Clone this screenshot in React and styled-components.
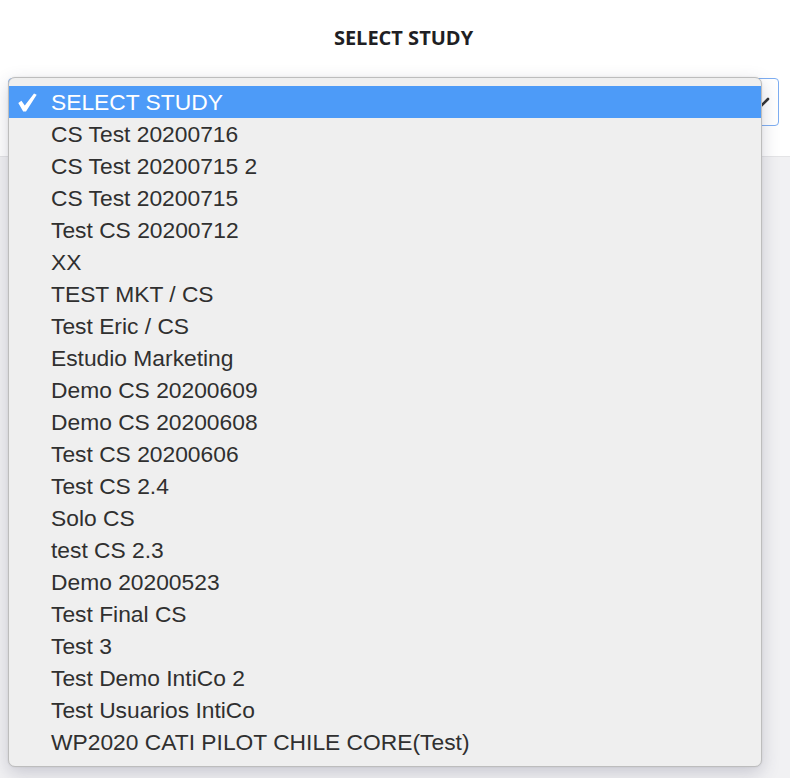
import React from "react";
import styled, { createGlobalStyle } from "styled-components";

const GlobalStyle = createGlobalStyle`
  html, body {
    margin: 0;
    padding: 0;
    background: #ffffff;
    font-family: "Liberation Sans", Arial, sans-serif;
  }
`;

const Page = styled.div`
  min-height: 100vh;
  display: flex;
  flex-direction: column;
`;

const Header = styled.header`
  background: #ffffff;
  height: 157px;
  border-bottom: 1px solid #e4e4e6;
  padding: 0 11px 0 8px;
  box-sizing: border-box;
  position: relative;
  z-index: 5;
`;

const Main = styled.main`
  flex: 1;
  background: #f1f1f3;
`;

const Title = styled.h4`
  margin: 0;
  padding: 24px 0 0 20px;
  height: 78px;
  box-sizing: border-box;
  text-align: center;
  font-family: "Open Sans", sans-serif;
  font-weight: 700;
  font-size: 20px;
  color: #1f1f24;
`;

const SelectWrap = styled.div`
  position: relative;
`;

const SelectBox = styled.div`
  height: 48px;
  box-sizing: border-box;
  border: 1px solid #7eaef2;
  border-radius: 4px;
  background: #fff;
  display: flex;
  align-items: center;
  justify-content: flex-end;
  padding-right: 7px;
`;

const Popup = styled.ul`
  position: absolute;
  left: 0;
  top: -1px;
  width: 754px;
  margin: 0;
  padding: 8px 0;
  list-style: none;
  background: #efefef;
  border: 1px solid #bdbdbd;
  border-radius: 7px;
  box-sizing: border-box;
  box-shadow: 0 6px 18px rgba(60, 60, 90, 0.22), 0 0 2px rgba(0, 0, 0, 0.1);
  z-index: 6;
`;

const Option = styled.li`
  height: 32px;
  display: flex;
  align-items: center;
  font-size: 22.8px;
  color: ${p => (p.$selected ? "#ffffff" : "#303030")};
  background: ${p => (p.$selected ? "#4d9bf8" : "transparent")};
`;

const Check = styled.span`
  width: 42px;
  height: 32px;
  padding-left: 9px;
  box-sizing: border-box;
  display: flex;
  align-items: center;
`;

const studies = [
  "SELECT STUDY",
  "CS Test 20200716",
  "CS Test 20200715 2",
  "CS Test 20200715",
  "Test CS 20200712",
  "XX",
  "TEST MKT / CS",
  "Test Eric / CS",
  "Estudio Marketing",
  "Demo CS 20200609",
  "Demo CS 20200608",
  "Test CS 20200606",
  "Test CS 2.4",
  "Solo CS",
  "test CS 2.3",
  "Demo 20200523",
  "Test Final CS",
  "Test 3",
  "Test Demo IntiCo 2",
  "Test Usuarios IntiCo",
  "WP2020 CATI PILOT CHILE CORE(Test)",
];

const CheckIcon = () => (
  <svg width="19" height="19" viewBox="0 0 19 19">
    <path d="M0.3 10 L3.4 7.8 L6.8 12.6 L16 0.4 L18.7 1.8 L8 18.6 L5.2 18.6 Z" fill="#ffffff" />
  </svg>
);

const App = () => (
  <Page>
    <GlobalStyle />
    <Header>
      <Title>SELECT STUDY</Title>
      <SelectWrap>
        <SelectBox>
          <svg width="18" height="14" viewBox="0 0 18 14">
            <path d="M3 4 L9 10 L15 4" fill="none" stroke="#333" strokeWidth="2.6" strokeLinecap="round" />
          </svg>
        </SelectBox>
        <Popup>
          {studies.map((s, i) => (
            <Option key={s} $selected={i === 0}>
              <Check>{i === 0 && <CheckIcon />}</Check>
              {s}
            </Option>
          ))}
        </Popup>
      </SelectWrap>
    </Header>
    <Main />
  </Page>
);

export default App;
